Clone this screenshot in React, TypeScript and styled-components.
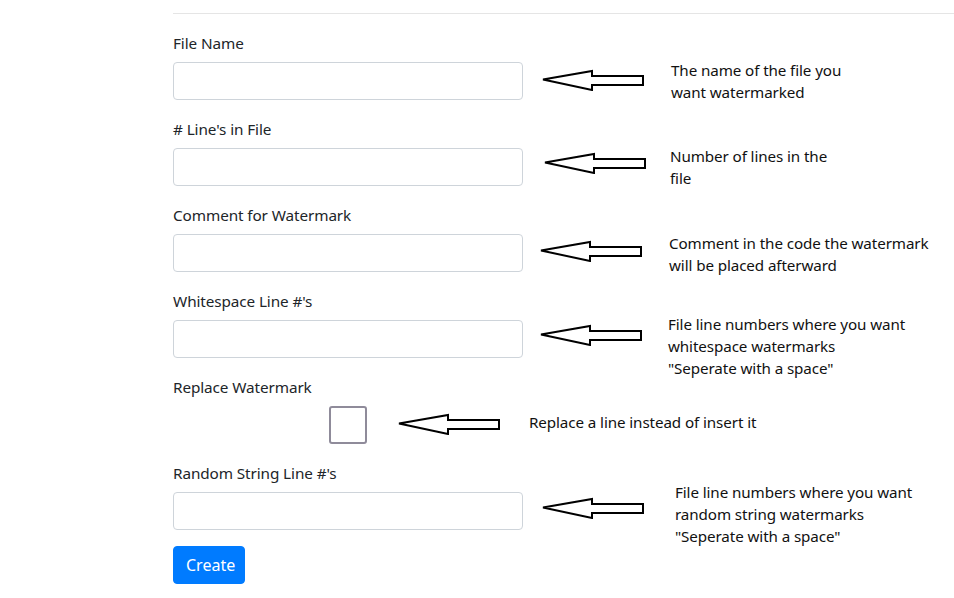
import React from "react";
import styled, { createGlobalStyle } from "styled-components";

const GlobalStyle = createGlobalStyle`
  html, body { margin: 0; padding: 0; background: #fff; }
  body {
    font-family: "Noto Sans", "Open Sans", sans-serif;
    font-size: 16px;
    line-height: 1.5;
    color: #212529;
  }
  * { box-sizing: border-box; }
`;

const Page = styled.div`
  padding: 13px 0 0 173px;
  width: 954px;
`;

const Rule = styled.hr`
  margin: 0 0 16px 0;
  border: 0;
  border-top: 1px solid rgba(0, 0, 0, 0.1);
`;

const Group = styled.div`
  display: flex;
  align-items: flex-start;
  height: 70px;
  margin-bottom: 16px;
`;

const Field = styled.div<{ $auto?: boolean }>`
  width: ${(p) => (p.$auto ? "auto" : "350px")};
  flex: none;
  display: flex;
  flex-direction: column;
`;

const Label = styled.label`
  display: block;
  height: 24px;
  margin-bottom: 8px;
  font-size: 15.3px;
  line-height: 26px;
  letter-spacing: -0.1px;
`;

const Input = styled.input`
  display: block;
  width: 100%;
  height: 38px;
  padding: 6px 12px;
  font-size: 16px;
  border: 1px solid #ced4da;
  border-radius: 4px;
  background: #fff;
  outline: none;
`;

const CheckLine = styled.div`
  display: flex;
  align-items: center;
`;

const CheckBox = styled.span`
  display: block;
  flex: none;
  width: 38px;
  height: 38px;
  margin-left: 156px;
  border: 2px solid #8f8b9a;
  border-radius: 3px;
  background: #fff;
`;

const Note = styled.div<{ $top: number; $left: number }>`
  display: flex;
  align-items: flex-start;
  margin-top: ${(p) => p.$top}px;
  margin-left: ${(p) => p.$left}px;
  flex: none;
`;

const ArrowBox = styled.svg<{ $dy: number }>`
  display: block;
  flex: none;
  width: 104px;
  height: 22px;
  margin-top: ${(p) => p.$dy}px;
`;

const NoteText = styled.div<{ $gap: number }>`
  margin-left: ${(p) => p.$gap}px;
  font-family: "Noto Sans", "Open Sans", sans-serif;
  font-size: 15.2px;
  line-height: 22px;
  color: #111;
  white-space: nowrap;
  letter-spacing: -0.1px;
`;

const Button = styled.button`
  display: inline-block;
  width: 72px;
  height: 38px;
  padding: 0 12px;
  font-family: "Noto Sans", "Open Sans", sans-serif;
  font-size: 16px;
  line-height: 36px;
  color: #fff;
  background: #007bff;
  border: 1px solid #007bff;
  border-radius: 4px;
  cursor: pointer;
`;

const Arrow: React.FC<{ dy: number }> = ({ dy }) => (
  <ArrowBox $dy={dy} viewBox="0 0 104 22">
    <path
      d="M2,10.5 L51,2 L51,7 L102,7 L102,16 L51,16 L51,21 Z"
      fill="#fff"
      stroke="#000"
      strokeWidth="2"
      strokeLinejoin="miter"
    />
  </ArrowBox>
);

type NoteSpec = { top: number; left: number; dy: number; gap: number; lines: string[] };

const Annotation: React.FC<NoteSpec> = ({ top, left, dy, gap, lines }) => (
  <Note $top={top} $left={left}>
    <Arrow dy={dy} />
    <NoteText $gap={gap}>
      {lines.map((l, i) => (
        <div key={i}>{l}</div>
      ))}
    </NoteText>
  </Note>
);

const fields: { label: string; note: NoteSpec }[] = [
  {
    label: "File Name",
    note: { top: 29, left: 18, dy: 10, gap: 26, lines: ["The name of the file you", "want watermarked"] },
  },
  {
    label: "# Line's in File",
    note: { top: 29, left: 20, dy: 7, gap: 23, lines: ["Number of lines in the", "file"] },
  },
  {
    label: "Comment for Watermark",
    note: { top: 30, left: 16, dy: 8, gap: 26, lines: ["Comment in the code the watermark", "will be placed afterward"] },
  },
  {
    label: "Whitespace Line #'s",
    note: {
      top: 25,
      left: 16,
      dy: 11,
      gap: 25,
      lines: ["File line numbers where you want", "whitespace watermarks", "\"Seperate with a space\""],
    },
  },
];

const lastField = {
  label: "Random String Line #'s",
  note: {
    top: 21,
    left: 18,
    dy: 16,
    gap: 30,
    lines: ["File line numbers where you want", "random string watermarks", "\"Seperate with a space\""],
  },
};

export default function App() {
  return (
    <>
      <GlobalStyle />
      <Page>
        <Rule />
        {fields.map((f) => (
          <Group key={f.label}>
            <Field>
              <Label>{f.label}</Label>
              <Input type="text" />
            </Field>
            <Annotation {...f.note} />
          </Group>
        ))}
        <Group>
          <Field $auto>
            <Label>Replace Watermark</Label>
            <CheckLine>
              <CheckBox />
              <Note $top={-4} $left={30}>
                <Arrow dy={2} />
                <NoteText $gap={28}>Replace a line instead of insert it</NoteText>
              </Note>
            </CheckLine>
          </Field>
        </Group>
        <Group>
          <Field>
            <Label>{lastField.label}</Label>
            <Input type="text" />
          </Field>
          <Annotation {...lastField.note} />
        </Group>
        <Button>Create</Button>
      </Page>
    </>
  );
}
